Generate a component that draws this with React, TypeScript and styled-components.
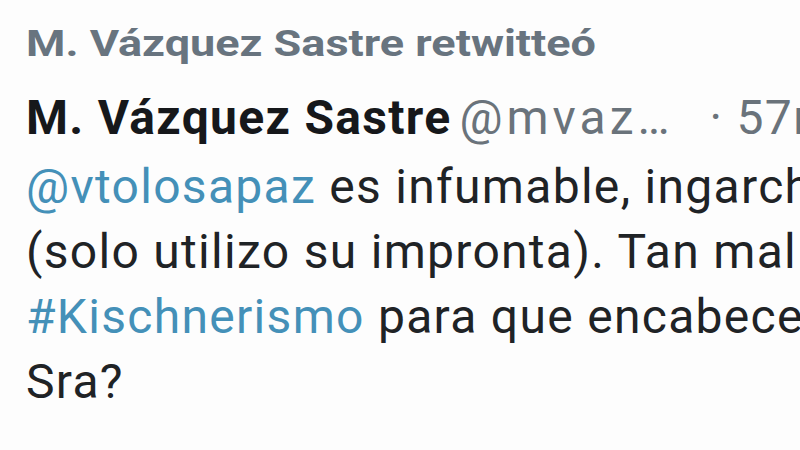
import React from "react";
import styled, { createGlobalStyle } from "styled-components";

const Global = createGlobalStyle`
  html, body { margin: 0; padding: 0; background: #ffffff; }
  body { width: 800px; height: 450px; overflow: hidden; }
`;

const Page = styled.div`
  width: 800px;
  height: 450px;
  overflow: hidden;
  background: #fdfdfd;
  font-family: Roboto, "Liberation Sans", sans-serif;
  padding-left: 26px;
  box-sizing: border-box;
`;

const RetweetLine = styled.div`
  display: inline-block;
  font-weight: 700;
  font-size: 36px;
  line-height: 36px;
  color: #68747f;
  margin-top: 26px;
  white-space: nowrap;
  transform: scaleX(1.25);
  transform-origin: left center;
`;

const HeaderRow = styled.div`
  display: flex;
  align-items: baseline;
  white-space: nowrap;
  margin-top: 32px;
  font-size: 48px;
  line-height: 48px;
  letter-spacing: 1.3px;
`;

const Name = styled.span`
  font-weight: 700;
  color: #16181b;
`;

const Meta = styled.span<{ $gap: number; $spacing: number }>`
  font-weight: 400;
  color: #6a737b;
  margin-left: ${(p) => p.$gap}px;
  letter-spacing: ${(p) => p.$spacing}px;
`;

const Body = styled.div`
  margin-top: 12px;
  font-size: 48px;
  line-height: 65px;
  letter-spacing: 1.3px;
  color: #1f2326;
  white-space: nowrap;
`;

const Line = styled.div`
  white-space: nowrap;
`;

const Link = styled.span`
  color: #4490b8;
`;

export default function App() {
  return (
    <>
      <Global />
      <Page>
        <RetweetLine>M. Vázquez Sastre retwitteó</RetweetLine>
        <HeaderRow>
          <Name>M. Vázquez Sastre</Name>
          <Meta $gap={8} $spacing={4}>@mvaz…</Meta>
          <Meta $gap={36} $spacing={1.3}>· 57m</Meta>
        </HeaderRow>
        <Body>
          <Line>
            <Link>@vtolosapaz</Link> es infumable, ingarch
          </Line>
          <Line>(solo utilizo su impronta). Tan mal</Line>
          <Line>
            <Link>#Kischnerismo</Link> para que encabece
          </Line>
          <Line>Sra?</Line>
        </Body>
      </Page>
    </>
  );
}
